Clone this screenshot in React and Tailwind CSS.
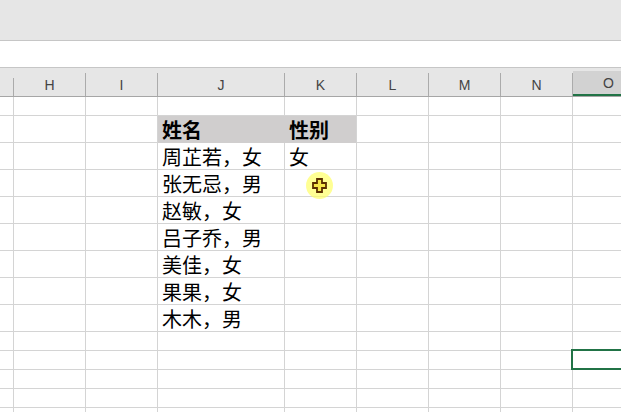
import React from "react";

const cols = [
  { key: "", w: "w-[14px]" },
  { key: "H", w: "w-[72px]" },
  { key: "I", w: "w-[72px]" },
  { key: "J", w: "w-[127px]" },
  { key: "K", w: "w-[72px]" },
  { key: "L", w: "w-[72px]" },
  { key: "M", w: "w-[72px]" },
  { key: "N", w: "w-[72px]" },
  { key: "O", w: "w-[72px]" },
];

const names = [
  "周芷若，女",
  "张无忌，男",
  "赵敏，女",
  "吕子乔，男",
  "美佳，女",
  "果果，女",
  "木木，男",
];

const cjk = { fontFamily: '"Noto Sans CJK SC", "Noto Sans", sans-serif' };

function Cell({ w, h, children, head, last }) {
  return (
    <div
      className={`${w} ${h} shrink-0 box-border border-b border-r ${
        head ? "bg-[#d0cece] border-b-[#d0cece]" : "border-[#d4d4d4]"
      } ${head && !last ? "border-r-[#d0cece]" : ""} ${head && last ? "border-r-[#d4d4d4]" : ""} pl-[4px] pt-[4px] text-[20px] leading-[20px] text-black whitespace-nowrap overflow-visible`}
      style={cjk}
    >
      {children}
    </div>
  );
}

function Row({ h, values = {}, head }) {
  return (
    <div className="flex">
      {cols.map((c, i) => (
        <Cell
          key={i}
          w={c.w}
          h={h}
          head={head && (c.key === "J" || c.key === "K")}
          last={c.key === "K"}
        >
          {values[c.key]}
        </Cell>
      ))}
    </div>
  );
}

export default function App() {
  const rows = [];
  rows.push(<Row key="r1" h="h-[19px]" />);
  rows.push(
    <Row
      key="r2"
      h="h-[27px]"
      head
      values={{ J: <b>姓名</b>, K: <b>性别</b> }}
    />
  );
  names.forEach((n, i) => {
    rows.push(
      <Row
        key={"n" + i}
        h="h-[27px]"
        values={i === 0 ? { J: n, K: "女" } : { J: n }}
      />
    );
  });
  for (let i = 0; i < 5; i++) rows.push(<Row key={"e" + i} h="h-[19px]" />);

  return (
    <div className="relative w-[621px] h-[412px] overflow-hidden bg-white">
      <div className="h-[41px] bg-[#e6e6e6] border-b border-[#c6c6c6]" />
      <div className="h-[27px] bg-white border-b border-[#c6c6c6]" />
      <div className="flex h-[29px] bg-[#e6e6e6] border-b border-[#a6a6a6]">
        {cols.map((c, i) => (
          <div key={i} className={`${c.w} shrink-0 flex flex-col`}>
            <div className="h-[10px]" />
            <div
              className={`flex-1 flex items-center justify-center pt-[2px] border-r border-[#ababab] text-[14px] text-[#444] ${
                c.key === "O" ? "bg-[#d2d2d2] border-b-2 border-b-[#217346]" : ""
              }`}
              style={{ fontFamily: '"Liberation Sans", Arial, sans-serif' }}
            >
              {c.key}
            </div>
          </div>
        ))}
      </div>
      <div>{rows}</div>

      <div className="absolute left-[571px] top-[349px] w-[70px] h-[21px] border-2 border-[#217346]" />

      <div className="absolute left-[306px] top-[172px] w-[27px] h-[27px] rounded-full bg-[#ffff66]/70 flex items-center justify-center">
        <svg width="15" height="15" viewBox="0 0 15 15">
          <path
            d="M5 1h5v4h4v5h-4v4H5v-4H1V5h4z"
            fill="#f6e84a"
            stroke="#5a2e00"
            strokeWidth="1.8"
            strokeLinejoin="miter"
          />
        </svg>
      </div>
    </div>
  );
}
